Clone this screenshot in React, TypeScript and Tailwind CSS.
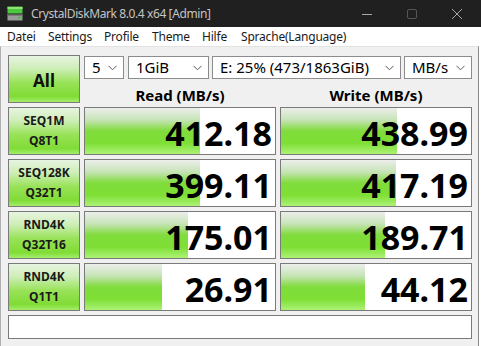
import React from "react";

const rows = [
  { a: "SEQ1M", b: "Q8T1", r: "412.18", w: "438.99", rb: 115, wb: 116 },
  { a: "SEQ128K", b: "Q32T1", r: "399.11", w: "417.19", rb: 115, wb: 115 },
  { a: "RND4K", b: "Q32T16", r: "175.01", w: "189.71", rb: 103, wb: 104 },
  { a: "RND4K", b: "Q1T1", r: "26.91", w: "44.12", rb: 77, wb: 84 },
];

const btnBg =
  "bg-[linear-gradient(to_bottom,#e8f4e2_0%,#cdeeb6_28%,#98e258_58%,#80dc36_88%,#a4ee6c_100%)]";
const barBg =
  "bg-[linear-gradient(to_bottom,#eceeec_0%,#c6e4b6_26%,#80dc3c_50%,#7edf34_76%,#acf276_100%)]";

function Chevron() {
  return (
    <svg width="9" height="6" viewBox="0 0 9 6" className="shrink-0">
      <polyline points="0.5,0.8 4.5,4.8 8.5,0.8" fill="none" stroke="#5a5a5a" strokeWidth="1" />
    </svg>
  );
}

function Drop({ w, text }: { w: string; text: string }) {
  return (
    <div className={`${w} h-[23px] bg-white border border-[#8c8c8c] flex items-center justify-between pl-[7px] pr-[6px] text-[15px] text-black leading-none`}>
      <span>{text}</span>
      <Chevron />
    </div>
  );
}

function Value({ v, bar }: { v: string; bar: number }) {
  return (
    <div className="relative h-[48px] bg-white border border-[#7a7a7a]">
      <div className={`absolute left-0 top-0 bottom-0 ${barBg}`} style={{ width: bar }} />
      <div className="relative h-full flex items-center justify-end pr-[3px] pt-[4px] text-[34px] font-bold leading-none text-black">
        {v}
      </div>
    </div>
  );
}

export default function App() {
  return (
    <div
      className="w-[481px] h-[346px] bg-white overflow-hidden"
      style={{ fontFamily: '"Noto Sans", "Open Sans", sans-serif' }}
    >
      {/* Title bar */}
      <div className="h-[27px] bg-[#202020] flex items-center relative">
        <svg width="16" height="15" viewBox="0 0 16 15" className="ml-[7px]">
          <rect x="0.5" y="0.5" width="15" height="7" fill="#4cc83c" />
          <rect x="0.5" y="1" width="15" height="2" fill="#8fe27a" />
          <rect x="0.5" y="8" width="15" height="6.5" fill="#9a9a9a" />
          <rect x="0.5" y="8" width="15" height="1.5" fill="#5a5a5a" />
          <rect x="11" y="11" width="3" height="1.5" fill="#3fbf35" />
        </svg>
        <span className="ml-[8px] text-[12px] tracking-[-0.4px] text-[#c4c4c4] leading-none">
          CrystalDiskMark 8.0.4 x64 [Admin]
        </span>
        <div className="ml-auto flex items-center h-full">
          <svg width="10" height="10" viewBox="0 0 10 10" className="mr-[35px]">
            <line x1="0" y1="5.5" x2="10" y2="5.5" stroke="#a8a8a8" strokeWidth="1" />
          </svg>
          <svg width="10" height="10" viewBox="0 0 10 10" className="mr-[35px]">
            <rect x="0.5" y="0.5" width="9" height="9" rx="1.5" fill="none" stroke="#555555" strokeWidth="1" />
          </svg>
          <svg width="10" height="10" viewBox="0 0 10 10" className="mr-[19px]">
            <line x1="0" y1="0" x2="10" y2="10" stroke="#a8a8a8" strokeWidth="1" />
            <line x1="10" y1="0" x2="0" y2="10" stroke="#a8a8a8" strokeWidth="1" />
          </svg>
        </div>
      </div>

      {/* Menu bar */}
      <div className="h-[19px] bg-white flex items-center pl-[7px] text-[12px] tracking-[-0.2px] text-[#1a1a1a] leading-none whitespace-nowrap">
        <span className="w-[41px]">Datei</span>
        <span className="w-[56px]">Settings</span>
        <span className="w-[48px]">Profile</span>
        <span className="w-[50px]">Theme</span>
        <span className="w-[39px]">Hilfe</span>
        <span>Sprache(Language)</span>
      </div>

      {/* Content */}
      <div className="w-[479px] h-[300px] bg-[#f0f0f0] border-t border-t-[#e2e2e2] border-l border-r border-l-[#b0b0b0] border-r-[#8a8a8a] pl-[7px] pt-[8px]">
        <div className="grid grid-cols-[72px_192px_192px] gap-x-[4px] gap-y-[4px]">
          <div className={`h-[48px] border border-[#7a7a7a] ${btnBg} flex items-center justify-center pt-[2px] text-[17px] font-bold text-[#111] leading-none`}>
            All
          </div>
          <div className="col-span-2 flex flex-col">
            <div className="mt-[1px] flex">
              <Drop w="w-[40px]" text="5" />
              <div className="w-[4px]" />
              <Drop w="w-[81px]" text="1GiB" />
              <div className="w-[3px]" />
              <Drop w="w-[189px]" text="E: 25% (473/1863GiB)" />
              <div className="w-[3px]" />
              <Drop w="w-[68px]" text="MB/s" />
            </div>
            <div className="grid grid-cols-2 gap-x-[4px] h-[24px] pt-[8px] text-[15px] font-bold text-black leading-none">
              <div className="flex items-center justify-center">Read (MB/s)</div>
              <div className="flex items-center justify-center">Write (MB/s)</div>
            </div>
          </div>

          {rows.map((row, i) => (
            <React.Fragment key={i}>
              <div className={`h-[48px] border border-[#7a7a7a] ${btnBg} flex flex-col items-center justify-center text-[12px] font-bold text-[#1a1a1a] leading-[20px]`}>
                <span>{row.a}</span>
                <span>{row.b}</span>
              </div>
              <Value v={row.r} bar={row.rb} />
              <Value v={row.w} bar={row.wb} />
            </React.Fragment>
          ))}

          <div className="col-span-3 h-[24px] bg-white border border-[#7a7a7a]" />
        </div>
      </div>
    </div>
  );
}
